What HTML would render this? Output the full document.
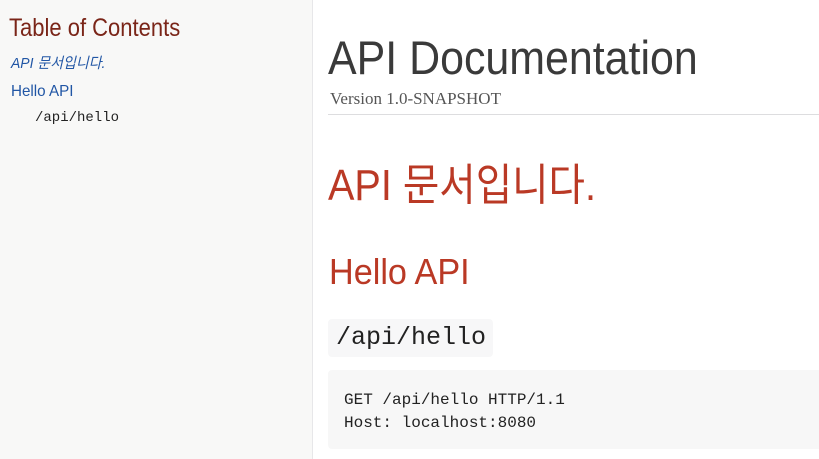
<!DOCTYPE html>
<html><head><meta charset="utf-8"><style>
body{margin:0;width:819px;height:459px;overflow:hidden;background:#fff;position:relative;font-family:"Liberation Sans","Noto Sans CJK KR",sans-serif}
.side{position:absolute;left:0;top:0;width:312px;height:459px;background:#f8f8f7;border-right:1px solid #e7e7e9}
.a{position:absolute;white-space:nowrap;line-height:1;transform-origin:left top}
.mono{font-family:"Liberation Mono","DejaVu Sans Mono",monospace}
</style></head><body>
<div class="side"></div>
<div class="a" style="left:9px;top:16px;font-size:25px;color:#7a2518;transform:scaleX(.88)">Table of Contents</div>
<div class="a" style="left:11px;top:56px;font-size:15px;color:#2156a5;font-style:italic;transform:scaleX(.93)">API 문서입니다.</div>
<div class="a" style="left:11px;top:84px;font-size:16px;color:#2156a5;transform:scaleX(.95)">Hello API</div>
<div class="a mono" style="left:35px;top:111px;font-size:14px;color:#222">/api/hello</div>

<div class="a" style="left:328px;top:34px;font-size:47px;color:#3a3a3a;transform:scaleX(.913)">API Documentation</div>
<div class="a" style="left:330px;top:90px;font-size:17px;color:#555;font-family:'Liberation Serif','DejaVu Serif',serif">Version 1.0-SNAPSHOT</div>
<div style="position:absolute;left:328px;top:114px;width:491px;height:1px;background:#dddddf"></div>
<div class="a" style="left:328px;top:164px;font-size:44px;color:#ba3925;transform:scaleX(.9)">API 문서입니다.</div>
<div class="a" style="left:329px;top:254px;font-size:36px;color:#ba3925;transform:scaleX(.95)">Hello API</div>
<div style="position:absolute;left:328px;top:319px;width:165px;height:38px;background:#f7f7f8;border-radius:4px"></div>
<div class="a mono" style="left:336px;top:325px;font-size:25px;color:#222">/api/hello</div>
<div style="position:absolute;left:328px;top:370px;width:495px;height:79px;background:#f7f7f7;border-radius:4px"></div>
<div class="a mono" style="left:344px;top:389px;font-size:16px;color:#222;line-height:23px">GET /api/hello HTTP/1.1<br>Host: localhost:8080</div>
</body></html>
